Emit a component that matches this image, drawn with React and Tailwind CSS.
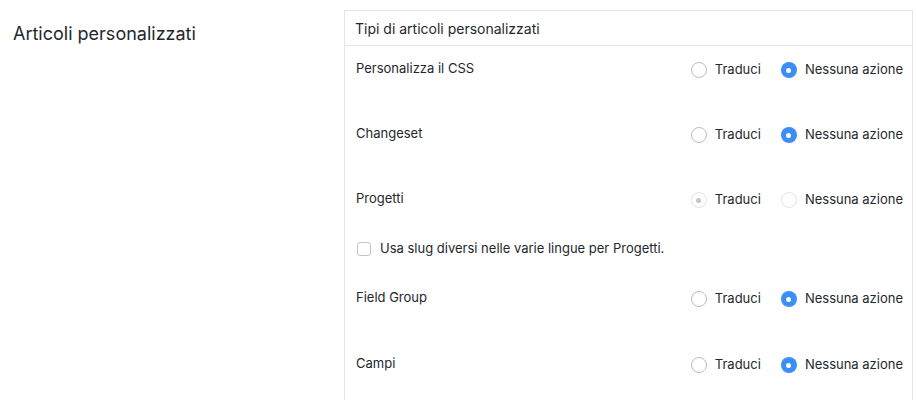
import React from "react";

const rows = [
  { label: "Personalizza il CSS", value: "none" },
  { label: "Changeset", value: "none" },
  { label: "Progetti", value: "translate", disabled: true, slug: true },
  { label: "Field Group", value: "none", tall: true },
  { label: "Campi", value: "none" },
];

function Radio({ checked, disabled, label }) {
  let circle = "border border-[#bdbdbd] bg-white";
  if (checked && !disabled) circle = "bg-[#3b8ef5]";
  if (disabled) circle = "border border-[#e3e3e3] bg-white";
  return (
    <label className="flex items-center gap-[8px]">
      <span
        className={`w-[16px] h-[16px] rounded-full flex items-center justify-center ${circle}`}
      >
        {checked && (
          <span
            className={`w-[5px] h-[5px] rounded-full ${
              disabled ? "bg-[#c4c4c4]" : "bg-white"
            }`}
          />
        )}
      </span>
      <span>{label}</span>
    </label>
  );
}

function Row({ row }) {
  return (
    <div
      className={`pl-[11px] pr-[9px] pt-[13px] ${
        row.tall ? "pb-[33px]" : "pb-[32px]"
      }`}
    >
      <div className="flex items-center justify-between h-[20px]">
        <span>{row.label}</span>
        <div className="flex items-center gap-[20px] translate-y-[1px]">
          <Radio
            label="Traduci"
            checked={row.value === "translate"}
            disabled={row.disabled}
          />
          <Radio
            label="Nessuna azione"
            checked={row.value === "none"}
            disabled={row.disabled}
          />
        </div>
      </div>
      {row.slug && (
        <div className="flex items-center gap-[9px] mt-[30px] -mb-[16px] h-[20px]">
          <span className="w-[14px] h-[14px] ml-[1px] rounded-[3px] border border-[#c4c4c4] bg-white" />
          <span>Usa slug diversi nelle varie lingue per Progetti.</span>
        </div>
      )}
    </div>
  );
}

export default function App() {
  return (
    <div
      className="w-[916px] h-[400px] bg-white text-[#23282d] flex overflow-hidden"
      style={{ fontFamily: "Inter, 'Helvetica Neue', Arial, sans-serif" }}
    >
      <div className="w-[344px] shrink-0 pl-[13px] pt-[21px]">
        <h2 className="text-[18px] leading-[26px]">Articoli personalizzati</h2>
      </div>
      <div className="mt-[10px] w-[569px] shrink-0 self-start pb-[40px] border border-[#e5e5e5] text-[13px]">
        <div className="h-[35px] border-b border-[#e5e5e5] flex items-center px-[10px] text-[14px]">
          Tipi di articoli personalizzati
        </div>
        {rows.map((r) => (
          <Row key={r.label} row={r} />
        ))}
      </div>
    </div>
  );
}
